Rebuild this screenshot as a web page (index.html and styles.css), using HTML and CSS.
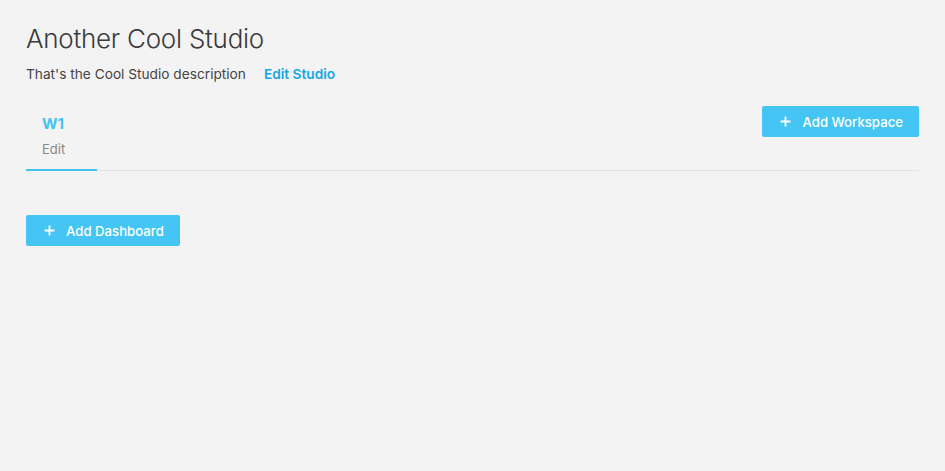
FILE: index.html
```html
<!DOCTYPE html>
<html>
<head>
<meta charset="utf-8">
<link rel="stylesheet" href="styles.css">
</head>
<body>
<div class="page">
  <h1 class="title">Another Cool Studio</h1>
  <div class="desc-row">
    <span class="desc">That's the Cool Studio description</span>
    <a class="edit-link" href="#">Edit Studio</a>
  </div>
  <div class="tabs">
    <div class="tab active">
      <div class="tab-name">W1</div>
      <div class="tab-edit">Edit</div>
    </div>
    <button class="btn btn-workspace"><svg class="plus" width="11" height="11" viewBox="0 0 11 11"><path d="M5.5 0.5v10M0.5 5.5h10" stroke="#fff" stroke-width="1.8"/></svg>Add Workspace</button>
  </div>
  <div class="content">
    <button class="btn"><svg class="plus" width="11" height="11" viewBox="0 0 11 11"><path d="M5.5 0.5v10M0.5 5.5h10" stroke="#fff" stroke-width="1.8"/></svg>Add Dashboard</button>
  </div>
</div>
</body>
</html>
```
FILE: styles.css
```css
html, body {
  margin: 0;
  background: #f3f3f3;
  font-family: Inter, "Noto Sans", sans-serif;
  color: #333;
}
.page {
  padding: 22px 26px 0 26px;
}
.title {
  margin: 0;
  font-size: 26px;
  font-weight: 300;
  line-height: 34px;
  color: #3a3a3a;
  letter-spacing: -0.25px;
}
.desc-row {
  display: flex;
  align-items: baseline;
  gap: 18px;
  margin-top: 10px;
  font-size: 13.7px;
  line-height: 16px;
}
.desc {
  color: #444;
}
.edit-link {
  color: #1aa6e4;
  font-weight: 600;
  text-decoration: none;
}
.tabs {
  display: flex;
  justify-content: space-between;
  align-items: flex-start;
  border-bottom: 1px solid #e2e2e2;
  margin-top: 15px;
}
.tab {
  width: 71px;
  padding: 18px 0 12px 16px;
  box-sizing: border-box;
  margin-bottom: -1px;
}
.tab.active {
  border-bottom: 2px solid #44c3f2;
}
.tab-name {
  font-size: 15px;
  font-weight: 700;
  color: #44c3f2;
  line-height: 18px;
}
.tab-edit {
  margin-top: 8px;
  font-size: 13px;
  color: #888;
  line-height: 16px;
}
.btn {
  display: inline-flex;
  align-items: center;
  height: 31px;
  padding: 0 16px 0 18px;
  background: #45c5f3;
  color: #fff;
  border: none;
  border-radius: 2px;
  font-family: inherit;
  font-size: 13.2px;
  font-weight: 500;
}
.btn-workspace {
  margin-top: 9px;
}
.plus {
  margin-right: 11px;
  display: block;
}
.content {
  padding-top: 44px;
}
```
